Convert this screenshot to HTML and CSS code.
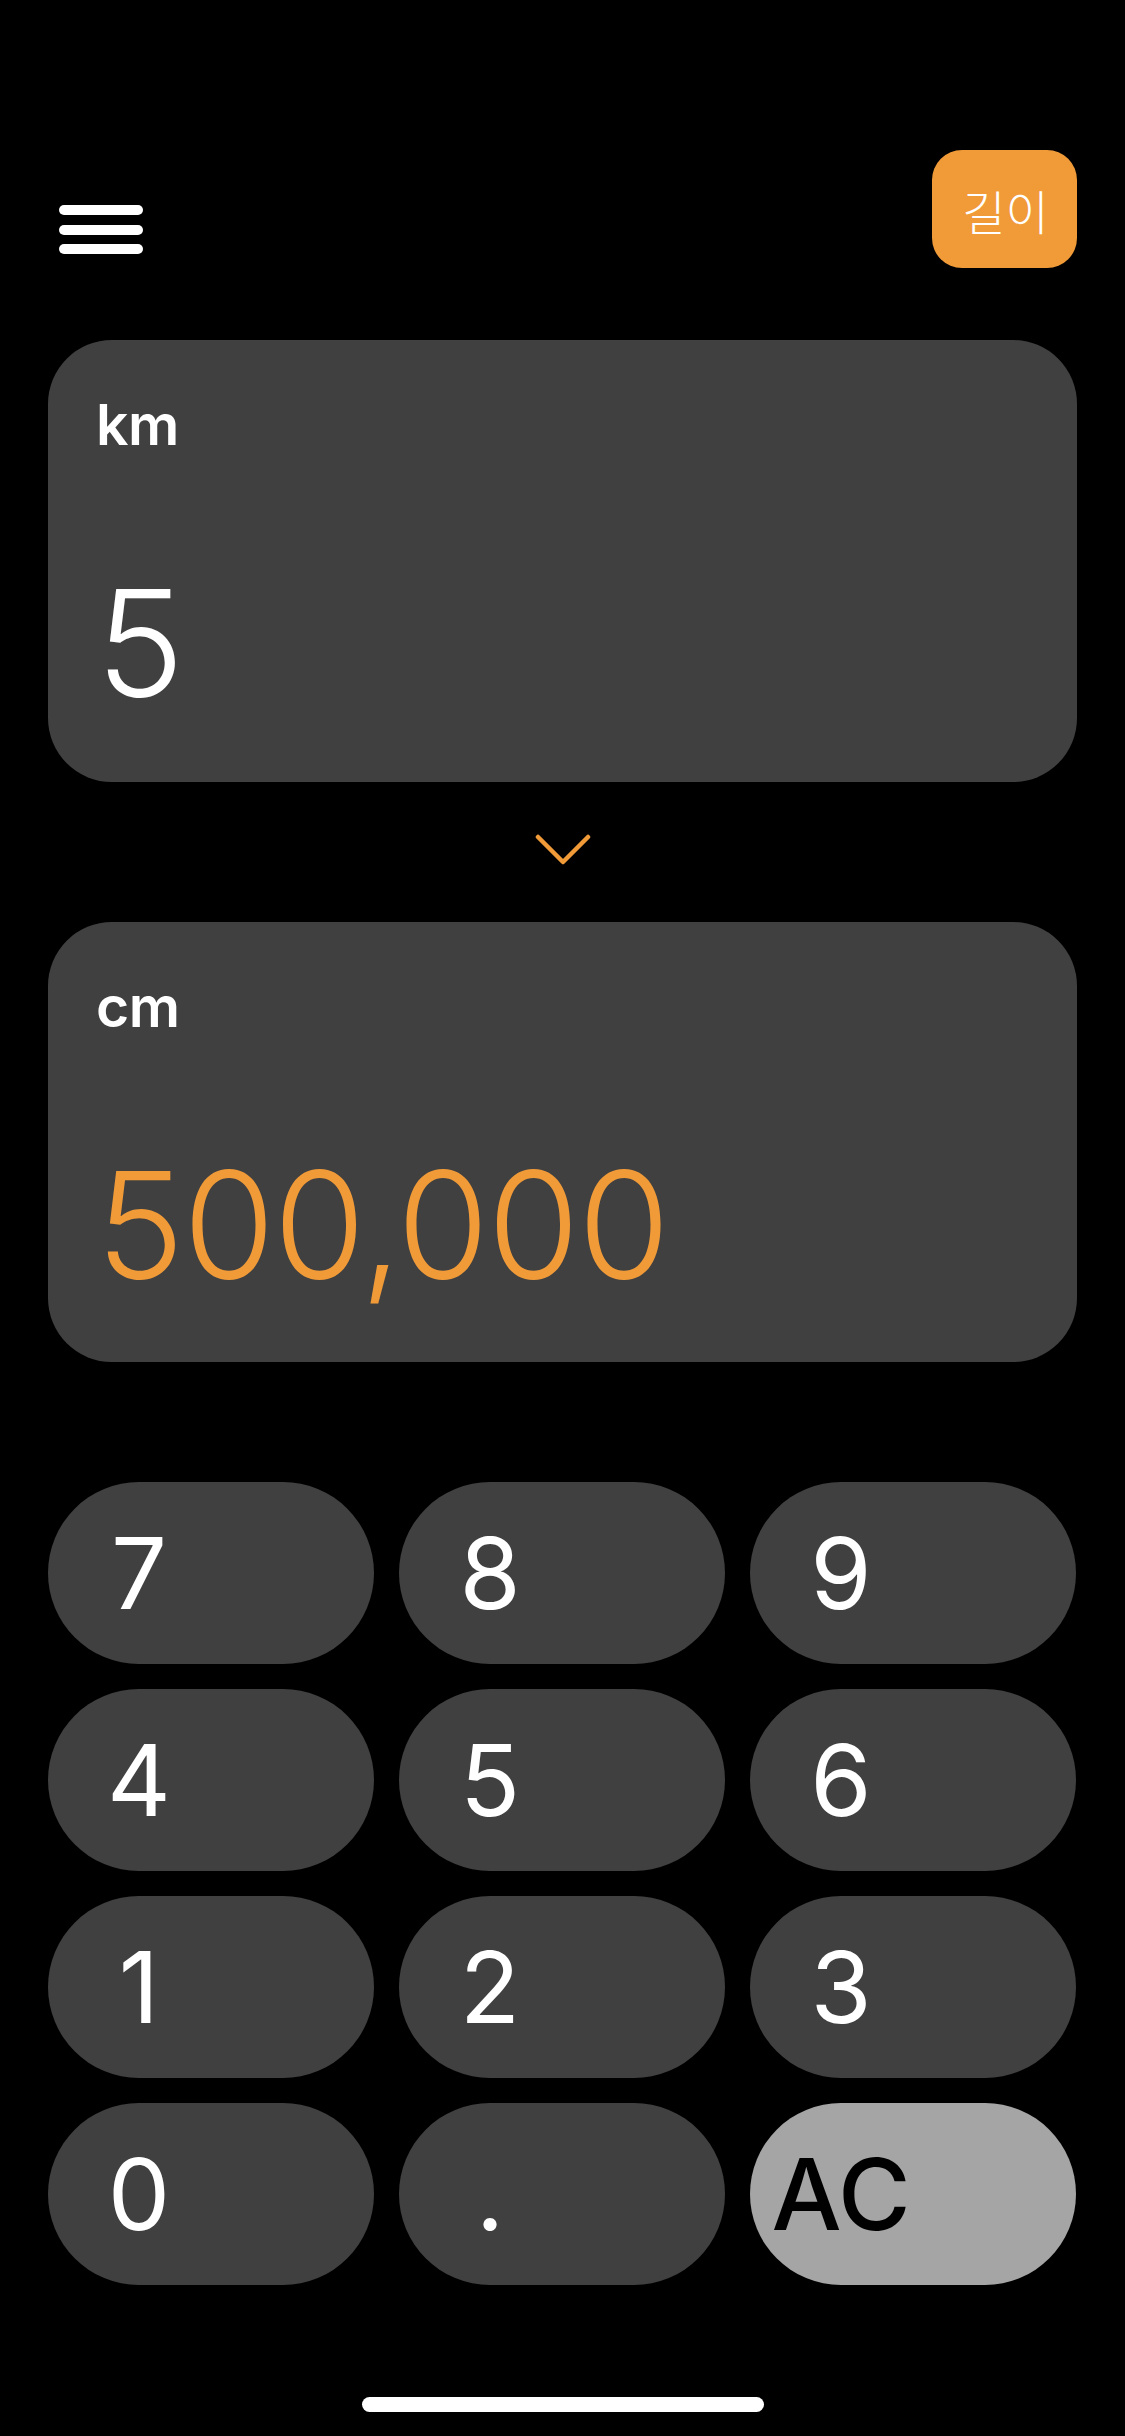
FILE: index.html
```html
<!DOCTYPE html>
<html lang="ko">
<head>
<meta charset="utf-8">
<title>길이 변환</title>
<link rel="stylesheet" href="styles.css">
</head>
<body>
<div class="screen">
  <header class="topbar">
    <button class="menu" aria-label="메뉴">
      <span class="bar"></span>
      <span class="bar"></span>
      <span class="bar"></span>
    </button>
    <div class="category">길이</div>
  </header>

  <section class="card">
    <div class="unit">km</div>
    <div class="value">5</div>
  </section>

  <div class="swap">
    <svg width="56" height="32" viewBox="0 0 56 32" aria-hidden="true">
      <polyline points="3,3 28,28 53,3" fill="none" stroke="#F09A38" stroke-width="4.5" stroke-linecap="round" stroke-linejoin="round"/>
    </svg>
  </div>

  <section class="card card-result">
    <div class="unit">cm</div>
    <div class="value result">500,000</div>
  </section>

  <div class="keypad">
    <button class="key"><span class="label">7</span></button>
    <button class="key"><span class="label">8</span></button>
    <button class="key"><span class="label">9</span></button>
    <button class="key"><span class="label">4</span></button>
    <button class="key"><span class="label">5</span></button>
    <button class="key"><span class="label">6</span></button>
    <button class="key"><span class="label">1</span></button>
    <button class="key"><span class="label">2</span></button>
    <button class="key"><span class="label">3</span></button>
    <button class="key"><span class="label">0</span></button>
    <button class="key"><span class="label">.</span></button>
    <button class="key key-clear"><span class="label">AC</span></button>
  </div>

  <div class="home-indicator"></div>
</div>
</body>
</html>
```

FILE: styles.css
```css
* {
  box-sizing: border-box;
}

html, body {
  margin: 0;
  padding: 0;
  background: #000;
}

body {
  font-family: Inter, "Noto Sans", "Liberation Sans", sans-serif;
  color: #fff;
}

.screen {
  width: 1125px;
  height: 2436px;
  overflow: hidden;
  padding: 150px 48px 0;
  display: flex;
  flex-direction: column;
}

.topbar {
  display: flex;
  justify-content: space-between;
  align-items: flex-start;
  height: 118px;
}

.menu {
  margin: 55px 0 0 11px;
  padding: 0;
  border: 0;
  background: none;
  display: flex;
  flex-direction: column;
  gap: 9.5px;
}

.bar {
  display: block;
  width: 84px;
  height: 10px;
  border-radius: 5px;
  background: #fff;
}

.category {
  width: 145px;
  height: 118px;
  border-radius: 30px;
  background: #F09A38;
  color: #fff;
  display: flex;
  align-items: center;
  justify-content: center;
  font-family: "Noto Sans CJK KR", sans-serif;
  font-weight: 300;
  font-size: 47px;
  line-height: 1;
  padding-left: 2px;
}

.card {
  margin-top: 72px;
  height: 442px;
  border-radius: 64px;
  background: #404040;
  padding: 56px 48px 0;
  display: flex;
  flex-direction: column;
}

.card-result {
  margin-top: 0;
  height: 440px;
}

.unit {
  font-size: 57px;
  font-weight: 600;
  line-height: 1;
  letter-spacing: -0.5px;
}

.value {
  margin-top: 116px;
  font-size: 149px;
  font-weight: 300;
  line-height: 1;
  letter-spacing: -1.5px;
}

.result {
  color: #F09A38;
}

.swap {
  height: 140px;
  display: flex;
  align-items: center;
  justify-content: center;
}

.swap svg {
  display: block;
  margin-top: -4px;
}

.keypad {
  margin-top: 120px;
  display: grid;
  grid-template-columns: repeat(3, 326px);
  grid-auto-rows: 182px;
  gap: 25px;
}

.key {
  border: 0;
  padding: 0;
  margin: 0;
  border-radius: 91px;
  background: #404040;
  color: #fff;
  display: flex;
  align-items: center;
  font-family: Inter, "Liberation Sans", sans-serif;
  font-size: 99px;
  font-weight: 400;
  line-height: 1;
}

.label {
  width: 182px;
  text-align: center;
}

.key-clear {
  background: #A5A5A5;
  color: #000;
  font-weight: 500;
}

.home-indicator {
  margin: 112px auto 0;
  width: 402px;
  height: 15px;
  border-radius: 8px;
  background: #fff;
}
```
